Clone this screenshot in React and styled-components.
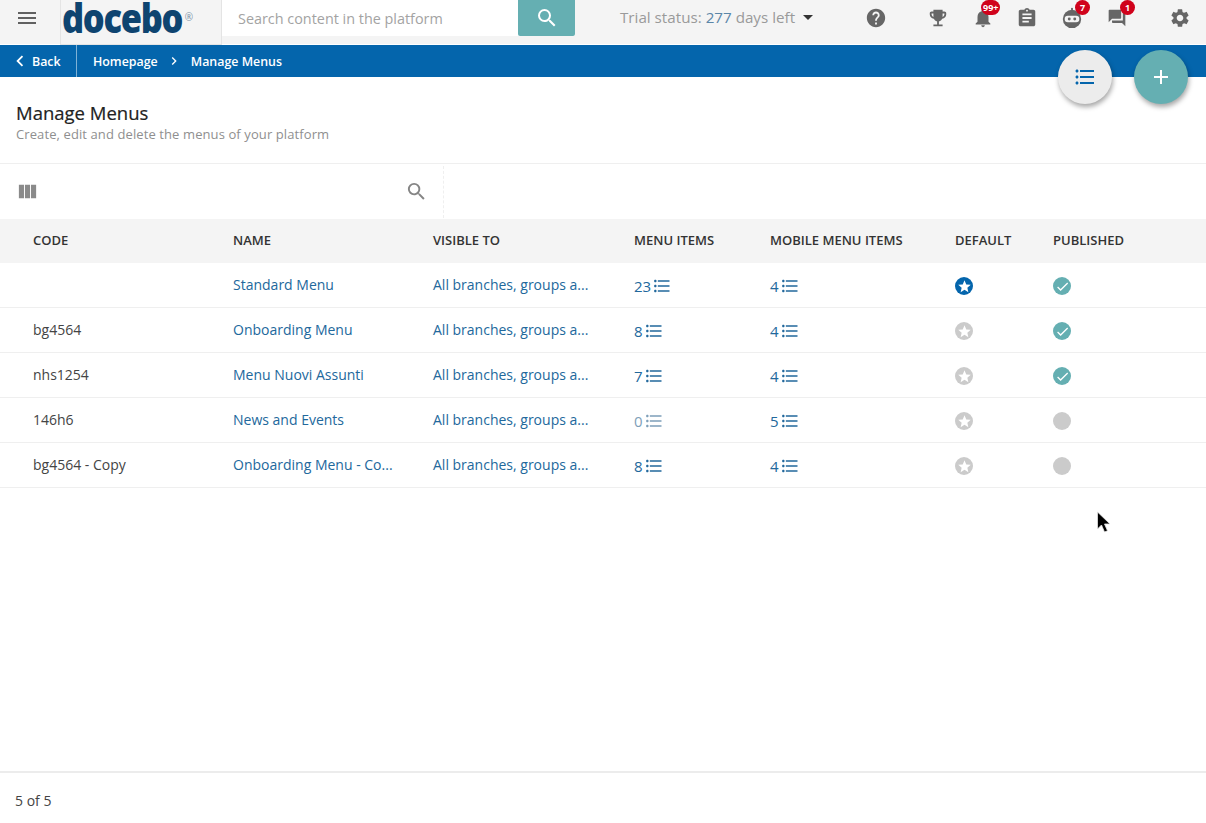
import React from "react";
import styled, { createGlobalStyle } from "styled-components";
import {
  MdMenu,
  MdSearch,
  MdHelp,
  MdEmojiEvents,
  MdNotifications,
  MdAssignment,
  MdForum,
  MdSettings,
  MdFormatListBulleted,
  MdViewColumn,
  MdCheck,
  MdStar,
  MdChevronLeft,
  MdChevronRight,
  MdAdd,
  MdArrowDropDown,
} from "react-icons/md";

const GlobalStyle = createGlobalStyle`
  html, body {
    margin: 0;
    padding: 0;
    background: #fff;
  }
  body {
    font-family: "Open Sans", "Liberation Sans", sans-serif;
    color: #333;
    overflow: hidden;
  }
`;

const Page = styled.div`
  position: relative;
  width: 1206px;
  height: 823px;
  display: flex;
  flex-direction: column;
  overflow: hidden;
`;

const Header = styled.header`
  height: 44px;
  flex: none;
  background: #f4f4f4;
  display: flex;
  align-items: flex-start;
`;

const Burger = styled.div`
  width: 53px;
  height: 36px;
  flex: none;
  margin-right: 7px;
  display: flex;
  align-items: center;
  justify-content: center;
  color: #616161;
  font-size: 24px;
`;

const LogoBox = styled.div`
  width: 162px;
  height: 45px;
  flex: none;
  box-sizing: border-box;
  padding-left: 1px;
  border-left: 1px solid #e4e4e4;
  border-right: 1px solid #e4e4e4;
  border-bottom: 1px solid #e4e4e4;
  display: flex;
  align-items: flex-start;
`;

const LogoText = styled.span`
  font-size: 40px;
  line-height: 35px;
  font-weight: 800;
  letter-spacing: -1.5px;
  color: #0e4470;
  transform: scaleX(0.86);
  transform-origin: left center;
`;

const LogoMark = styled.span`
  font-size: 10px;
  line-height: 10px;
  color: #7e93a8;
  margin: 12px 0 0 -17px;
`;

const SearchForm = styled.div`
  width: 353px;
  height: 36px;
  flex: none;
  display: flex;
  background: #fff;
`;

const SearchInput = styled.div`
  flex: 1;
  padding-left: 16px;
  font-size: 14.4px;
  line-height: 37px;
  color: #a3a3a3;
`;

const SearchButton = styled.div`
  width: 57px;
  background: #65afb2;
  border-radius: 0 0 2px 2px;
  display: flex;
  align-items: center;
  justify-content: center;
  color: #fff;
  font-size: 24px;
`;

const Trial = styled.div`
  margin-left: 45px;
  width: 223px;
  flex: none;
  display: flex;
  align-items: center;
  height: 34px;
  font-size: 15.2px;
  color: #9a9a9a;
  white-space: pre;
`;

const TrialDays = styled.span`
  color: #5b86a8;
`;

const Caret = styled(MdArrowDropDown)`
  font-size: 24px;
  color: #333;
  margin-left: -3px;
`;

const IconBar = styled.div`
  flex: 1;
  height: 36px;
  position: relative;
  color: #666;
`;

const TopIcon = styled.span`
  position: absolute;
  left: ${(p) => p.$x}px;
  top: 6px;
  width: 24px;
  height: 24px;
  display: flex;
  align-items: center;
  justify-content: center;
  font-size: ${(p) => p.$size || 22}px;
`;

const Badge = styled.span`
  position: absolute;
  left: ${(p) => p.$x}px;
  top: 0;
  min-width: 15px;
  height: 15px;
  padding: 0 2px;
  box-sizing: border-box;
  border-radius: 8px;
  background: #d0021b;
  color: #fff;
  font-size: 9px;
  font-weight: 700;
  line-height: 15px;
  text-align: center;
`;

const Crumbs = styled.nav`
  height: 32px;
  flex: none;
  margin-top: 1px;
  background: #0465ac;
  display: flex;
  align-items: center;
  color: #fff;
  font-size: 12.4px;
  font-weight: 600;
`;

const BackLink = styled.div`
  width: 77px;
  height: 32px;
  flex: none;
  box-sizing: border-box;
  padding-left: 9px;
  border-right: 1px solid #7fb2d6;
  display: flex;
  align-items: center;
  gap: 1px;
`;

const Crumb = styled.span`
  margin-left: ${(p) => p.$gap}px;
`;

const CrumbIcon = styled.span`
  display: flex;
  font-size: ${(p) => p.$size}px;
  margin-left: ${(p) => p.$gap || 0}px;
`;

const Fab = styled.div`
  position: absolute;
  top: ${(p) => p.$top}px;
  left: ${(p) => p.$left}px;
  width: 54px;
  height: 54px;
  border-radius: 50%;
  background: ${(p) => (p.$primary ? "#65afb2" : "#ececec")};
  color: ${(p) => (p.$primary ? "#fff" : "#0465ac")};
  box-shadow: 1px 3px 5px rgba(0, 0, 0, 0.35);
  display: flex;
  align-items: center;
  justify-content: center;
  font-size: ${(p) => p.$size}px;
`;

const TitleBlock = styled.div`
  height: 87px;
  flex: none;
  box-sizing: border-box;
  padding: 24px 16px 0;
  border-bottom: 1px solid #efefef;
`;

const Title = styled.h1`
  margin: 0;
  font-size: 18.5px;
  line-height: 24px;
  font-weight: 400;
  color: #222;
  -webkit-text-stroke: 0.2px #222;
`;

const Subtitle = styled.p`
  margin: 0;
  font-size: 13px;
  line-height: 18px;
  font-weight: 400;
  letter-spacing: 0.1px;
  color: #8f8f8f;
`;

const Toolbar = styled.div`
  height: 55px;
  flex: none;
  display: flex;
  align-items: center;
`;

const ColumnsButton = styled.div`
  width: 405px;
  flex: none;
  box-sizing: border-box;
  padding-left: 16px;
  display: flex;
  color: #8a8a8a;
  font-size: 23px;
`;

const ToolbarSearch = styled.div`
  width: 39px;
  height: 52px;
  flex: none;
  box-sizing: border-box;
  border-right: 1px dashed #efefef;
  display: flex;
  align-items: center;
  color: #858585;
  font-size: 23px;
`;

const Row = styled.div`
  display: grid;
  grid-template-columns: 200px 200px 201px 136px 185px 98px 1fr;
  padding-left: 33px;
  align-items: center;
  box-sizing: border-box;
`;

const HeadRow = styled(Row)`
  height: 44px;
  padding-bottom: 3px;
  background: #f4f4f4;
  font-size: 13px;
  font-weight: 600;
  color: #333;
`;

const BodyRow = styled(Row)`
  height: 45px;
  padding-bottom: 2px;
  border-bottom: 1px solid #efefef;
  font-size: 14px;
  color: #444;
`;

const LinkCell = styled.span`
  color: #22689c;
`;

const Count = styled.span`
  display: flex;
  align-items: center;
  gap: 1px;
  color: ${(p) => (p.$muted ? "#7e9fb9" : "#22689c")};
  font-size: 15px;
  padding-top: 3px;
`;

const ListIcon = styled(MdFormatListBulleted)`
  font-size: 20px;
  color: ${(p) => (p.$muted ? "#7e9fb9" : "#22689c")};
`;

const Dot = styled.span`
  width: 18px;
  height: 18px;
  border-radius: 50%;
  display: flex;
  align-items: center;
  justify-content: center;
  background: ${(p) => p.$bg};
  color: #fff;
  font-size: 15px;
  margin-top: 4px;
`;

const Spacer = styled.div`
  flex: 1;
`;

const Footer = styled.footer`
  height: 52px;
  flex: none;
  box-sizing: border-box;
  border-top: 2px solid #ececec;
  padding: 18px 15px 0;
  font-size: 14px;
  line-height: 19px;
  color: #444;
`;

const Cursor = styled.svg`
  position: absolute;
  left: 1096px;
  top: 511px;
`;

const rows = [
  { code: "", name: "Standard Menu", items: 23, mobile: 4, isDefault: true, published: true },
  { code: "bg4564", name: "Onboarding Menu", items: 8, mobile: 4, published: true },
  { code: "nhs1254", name: "Menu Nuovi Assunti", items: 7, mobile: 4, published: true },
  { code: "146h6", name: "News and Events", items: 0, mobile: 5 },
  { code: "bg4564 - Copy", name: "Onboarding Menu - Co...", items: 8, mobile: 4 },
];

function RobotIcon() {
  return (
    <svg width="22" height="22" viewBox="0 0 24 24" fill="currentColor">
      <rect x="11" y="1" width="2" height="4" />
      <circle cx="12" cy="13" r="10" />
      <rect x="4" y="9.5" width="16" height="7" rx="3.5" fill="#f4f4f4" />
      <circle cx="9" cy="13" r="1.6" />
      <circle cx="15" cy="13" r="1.6" />
    </svg>
  );
}

export default function App() {
  return (
    <Page>
      <GlobalStyle />
      <Header>
        <Burger>
          <MdMenu />
        </Burger>
        <LogoBox>
          <LogoText>docebo</LogoText>
          <LogoMark>®</LogoMark>
        </LogoBox>
        <SearchForm>
          <SearchInput>Search content in the platform</SearchInput>
          <SearchButton>
            <MdSearch />
          </SearchButton>
        </SearchForm>
        <Trial>
          Trial status: <TrialDays>277</TrialDays> days left <Caret />
        </Trial>
        <IconBar>
          <TopIcon $x={21}><MdHelp /></TopIcon>
          <TopIcon $x={83}><MdEmojiEvents /></TopIcon>
          <TopIcon $x={128}><MdNotifications /></TopIcon>
          <Badge $x={138}>99+</Badge>
          <TopIcon $x={172}><MdAssignment /></TopIcon>
          <TopIcon $x={217}><RobotIcon /></TopIcon>
          <Badge $x={232}>7</Badge>
          <TopIcon $x={262} $size={20}><MdForum /></TopIcon>
          <Badge $x={277}>1</Badge>
          <TopIcon $x={325}><MdSettings /></TopIcon>
        </IconBar>
      </Header>
      <Crumbs>
        <BackLink>
          <MdChevronLeft size={22} />
          Back
        </BackLink>
        <Crumb $gap={16}>Homepage</Crumb>
        <CrumbIcon $size={16} $gap={8}><MdChevronRight /></CrumbIcon>
        <Crumb $gap={9}>Manage Menus</Crumb>
      </Crumbs>
      <TitleBlock>
        <Title>Manage Menus</Title>
        <Subtitle>Create, edit and delete the menus of your platform</Subtitle>
      </TitleBlock>
      <Toolbar>
        <ColumnsButton>
          <MdViewColumn />
        </ColumnsButton>
        <ToolbarSearch>
          <MdSearch />
        </ToolbarSearch>
      </Toolbar>
      <HeadRow>
        <span>CODE</span>
        <span>NAME</span>
        <span>VISIBLE TO</span>
        <span>MENU ITEMS</span>
        <span>MOBILE MENU ITEMS</span>
        <span>DEFAULT</span>
        <span>PUBLISHED</span>
      </HeadRow>
      {rows.map((row) => (
        <BodyRow key={row.name}>
          <span>{row.code}</span>
          <LinkCell>{row.name}</LinkCell>
          <LinkCell>All branches, groups a...</LinkCell>
          <Count $muted={row.items === 0}>
            {row.items}
            <ListIcon $muted={row.items === 0} />
          </Count>
          <Count>
            {row.mobile}
            <ListIcon />
          </Count>
          <Dot $bg={row.isDefault ? "#0465ac" : "#cbcbcb"}>
            <MdStar />
          </Dot>
          <Dot $bg={row.published ? "#65afb2" : "#cbcbcb"}>
            {row.published && <MdCheck />}
          </Dot>
        </BodyRow>
      ))}
      <Spacer />
      <Footer>5 of 5</Footer>
      <Fab $top={50} $left={1058} $size={24}>
        <MdFormatListBulleted />
      </Fab>
      <Fab $primary $top={50} $left={1134} $size={24}>
        <MdAdd />
      </Fab>
      <Cursor width="16" height="26" viewBox="0 0 16 26">
        <path
          d="M1.5 1v17l4-4 3 7 3-1.2-3-6.8h5.5z"
          fill="#000"
          stroke="#e5e5e5"
          strokeWidth="0.8"
        />
      </Cursor>
    </Page>
  );
}
